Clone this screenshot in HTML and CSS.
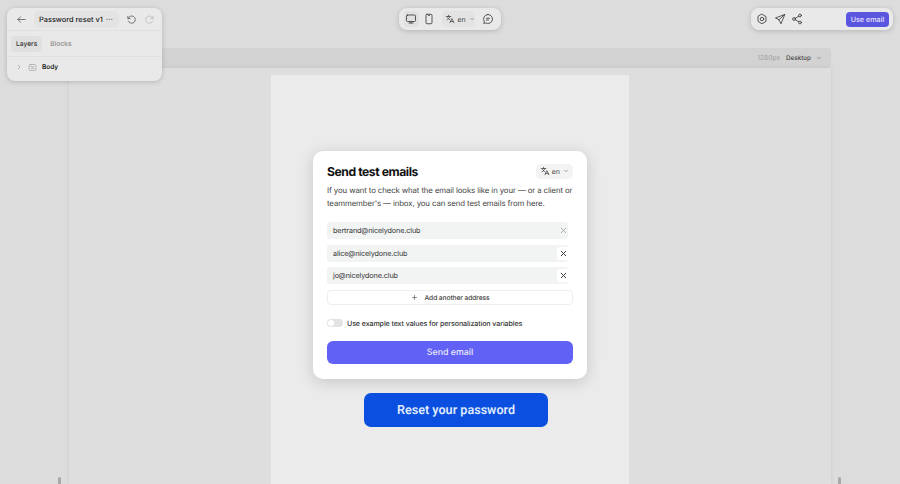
FILE: index.html
```html
<!DOCTYPE html>
<html lang="en">
<head>
  <meta charset="UTF-8" />
  <meta name="viewport" content="width=device-width, initial-scale=1" />
  <title>Password reset v1</title>
  <link rel="stylesheet" href="styles.css">
</head>
<body>

  <!-- Left panel -->
  <div class="panel panel-left">
    <div class="panel-head">
      <svg class="icon back" viewBox="0 0 24 24"><path d="M20 12H4M10 6l-6 6 6 6"/></svg>
      <div class="doc-name">
        <span>Password reset v1</span>
        <span class="dots">···</span>
      </div>
      <svg class="icon undo" viewBox="0 0 24 24"><path d="M4 5v5h5M4.6 10A8 8 0 1 1 5 15.5"/></svg>
      <svg class="icon redo" viewBox="0 0 24 24"><path d="M20 5v5h-5M19.4 10A8 8 0 1 0 19 15.5"/></svg>
    </div>
    <div class="tabs">
      <span class="tab active">Layers</span>
      <span class="tab">Blocks</span>
    </div>
    <div class="tree-row">
      <svg class="chevron" viewBox="0 0 24 24"><path d="M9 5l7 7-7 7"/></svg>
      <svg class="body-icon" viewBox="0 0 24 24"><rect x="3" y="4" width="18" height="16" rx="3"/><path d="M8 9h3M13 15h3M8 15l8-6"/></svg>
      <span class="tree-label">Body</span>
    </div>
  </div>

  <!-- Center toolbar -->
  <div class="panel panel-center">
    <span class="tool-btn active">
      <svg class="icon" viewBox="0 0 24 24"><rect x="3" y="4" width="18" height="13" rx="2"/><path d="M12 17v3M8 20h8"/></svg>
    </span>
    <span class="tool-btn">
      <svg class="icon" viewBox="0 0 24 24"><rect x="6" y="2.5" width="12" height="19" rx="2"/><path d="M11 5h2"/></svg>
    </span>
    <span class="lang lang-toolbar">
      <svg class="icon" viewBox="0 0 24 24"><path d="M3 6h11M8.500 3v3M5 14c3-1.500 6-4.500 7-8M6 8c1 2.500 3 4.500 6 6M12 21l4.500-10L21 21M13.500 18h6"/></svg>
      <span>en</span>
      <svg class="chevron" viewBox="0 0 24 24"><path d="M6 9l6 6 6-6"/></svg>
    </span>
    <span class="tool-btn chat">
      <svg class="icon" viewBox="0 0 24 24"><path d="M12 3a9 9 0 1 1-4.500 16.800L3.500 21l1.200-4A9 9 0 0 1 12 3z"/><path d="M9 10.500h6M9 14h4"/></svg>
    </span>
  </div>

  <!-- Right toolbar -->
  <div class="panel panel-right">
    <svg class="icon" viewBox="0 0 24 24"><path d="M12 2.500l8 4.700v9.600l-8 4.700-8-4.700V7.200z"/><circle cx="12" cy="12" r="3.500"/></svg>
    <svg class="icon" viewBox="0 0 24 24"><path d="M21 3L3 10l7 3.500L13.500 21zM10 13.500L21 3"/></svg>
    <svg class="icon" viewBox="0 0 24 24"><circle cx="18" cy="5" r="2.800"/><circle cx="6" cy="12" r="2.800"/><circle cx="18" cy="19" r="2.800"/><path d="M8.500 10.600l7-4.200M8.500 13.400l7 4.200"/></svg>
    <button class="use-email">Use email</button>
  </div>

  <div class="workspace">
    <div class="size-bar">
      <span class="px">1280px</span>
      <span class="device">Desktop</span>
      <svg class="chevron" viewBox="0 0 24 24"><path d="M6 9l6 6 6-6"/></svg>
    </div>

    <div class="canvas">
      <div class="email-page">
        <div class="modal">
          <div class="modal-head">
            <h2>Send test emails</h2>
            <span class="lang">
              <svg class="icon" viewBox="0 0 24 24"><path d="M3 6h11M8.500 3v3M5 14c3-1.500 6-4.500 7-8M6 8c1 2.500 3 4.500 6 6M12 21l4.500-10L21 21M13.500 18h6"/></svg>
              <span>en</span>
              <svg class="chevron" viewBox="0 0 24 24"><path d="M6 9l6 6 6-6"/></svg>
            </span>
          </div>
          <p>If you want to check what the email looks like in your — or a client or teammember's — inbox, you can send test emails from here.</p>

          <div class="address-list">
            <div class="address">
              <span class="address-text">bertrand@nicelydone.club</span>
              <span class="remove disabled"><svg viewBox="0 0 24 24"><path d="M6 6l12 12M18 6L6 18"/></svg></span>
            </div>
            <div class="address">
              <span class="address-text">alice@nicelydone.club</span>
              <span class="remove"><svg viewBox="0 0 24 24"><path d="M6 6l12 12M18 6L6 18"/></svg></span>
            </div>
            <div class="address">
              <span class="address-text">jo@nicelydone.club</span>
              <span class="remove"><svg viewBox="0 0 24 24"><path d="M6 6l12 12M18 6L6 18"/></svg></span>
            </div>
          </div>

          <div class="add-address">
            <svg viewBox="0 0 24 24"><path d="M12 5v14M5 12h14"/></svg>
            <span>Add another address</span>
          </div>

          <div class="toggle-row">
            <span class="toggle"><span class="knob"></span></span>
            <span>Use example text values for personalization variables</span>
          </div>

          <button class="send">Send email</button>
        </div>

        <a class="reset-btn">Reset your password</a>
      </div>
    </div>
  </div>

  <span class="handle handle-left"></span>
  <span class="handle handle-right"></span>

</body>
</html>
```

FILE: styles.css
```css
html, body {
  height: 100%;
}
body {
  font-family: Inter, "Liberation Sans", sans-serif;
  margin: 0;
  background-color: #dcdcdc;
  color: #222;
  overflow: hidden;
  position: relative;
  text-rendering: geometricPrecision;
}
button {
  text-rendering: geometricPrecision;
}
svg {
  fill: none;
  stroke: currentColor;
  stroke-width: 2;
  stroke-linecap: round;
  stroke-linejoin: round;
  flex-shrink: 0;
}
.icon {
  width: 12px;
  height: 12px;
  stroke-width: 1.7;
  color: #3c3c3c;
}
.chevron {
  width: 6px;
  height: 6px;
  color: #555;
}

/* Floating panels */
.panel {
  position: absolute;
  z-index: 5;
  background: #e9e9e9;
  border-radius: 8px;
  box-shadow: 0 1px 5px rgba(0, 0, 0, 0.18);
}
.panel-left {
  top: 8px;
  left: 7px;
  width: 155px;
  height: 73px;
}
.panel-head {
  display: flex;
  align-items: center;
  height: 22px;
  padding: 0 4px 0 9px;
  border-bottom: 1px solid #e0e0e0;
}
.back {
  width: 11px;
  height: 11px;
  margin-right: 7px;
  color: #555;
}
.doc-name {
  display: flex;
  align-items: center;
  justify-content: space-between;
  width: 85px;
  height: 17px;
  padding: 0 6px 0 5px;
  box-sizing: border-box;
  background: #e3e3e3;
  border-radius: 5px;
  font-size: 7.4px;
  font-weight: 500;
  white-space: nowrap;
}
.dots {
  font-size: 8px;
  color: #555;
}
.undo {
  width: 11px;
  height: 11px;
  margin-left: 7px;
  color: #555;
}
.redo {
  width: 11px;
  height: 11px;
  margin-left: 7px;
  color: #b8b8b8;
}
.tabs {
  display: flex;
  align-items: center;
  height: 25px;
  padding: 0 4px;
  border-bottom: 1px solid #e0e0e0;
  font-size: 6.7px;
  font-weight: 500;
}
.tab {
  padding: 4px 5px;
  border-radius: 4px;
  color: #8c8c8c;
}
.tab.active {
  background: #e0e0e0;
  color: #333;
  margin-right: 3px;
}
.tree-row {
  display: flex;
  align-items: center;
  height: 20px;
  padding: 0 9px;
  font-size: 6.5px;
  font-weight: 600;
}
.tree-row .chevron {
  width: 6px;
  height: 6px;
  margin-right: 6px;
  color: #777;
}
.body-icon {
  width: 9px;
  height: 9px;
  margin-right: 5px;
  color: #999;
  stroke-width: 1.6;
}
.panel-center {
  top: 8px;
  left: 399px;
  width: 102px;
  height: 22px;
  display: flex;
  align-items: center;
  padding: 0 5px;
  box-sizing: border-box;
}
.tool-btn {
  display: flex;
  align-items: center;
  justify-content: center;
  width: 15px;
  height: 16px;
  border-radius: 4px;
}
.tool-btn + .tool-btn {
  margin-left: 3px;
}
.tool-btn.active {
  background: #e0e0e0;
}
.tool-btn.chat {
  width: 17px;
  margin-left: 4px;
}
.lang {
  display: flex;
  align-items: center;
  gap: 2px;
  height: 15px;
  padding: 0 4px;
  background: #f3f3f3;
  border-radius: 5px;
  font-size: 7px;
  color: #444;
}
.lang .icon {
  width: 10px;
  height: 10px;
}
.lang .chevron {
  margin-left: 1px;
}
.lang-toolbar {
  background: #e3e3e3;
  margin-left: 6px;
  width: 33px;
  height: 16px;
  box-sizing: border-box;
  padding: 0 3px;
}
.panel-right {
  top: 8px;
  left: 751px;
  width: 142px;
  height: 22px;
  display: flex;
  align-items: center;
  gap: 5.5px;
  padding: 0 4px 0 5px;
  box-sizing: border-box;
}
.use-email {
  margin-left: auto;
  width: 43px;
  height: 15px;
  padding: 0;
  border: none;
  border-radius: 4px;
  background: #5a56e0;
  color: #e4e3fb;
  font-family: inherit;
  font-size: 7.2px;
  font-weight: 500;
}

/* Editor area */
.workspace {
  padding: 48px 69px 0;
}
.size-bar {
  display: flex;
  align-items: center;
  justify-content: flex-end;
  height: 20px;
  padding-right: 9px;
  background: #d2d2d2;
  border-radius: 4px;
  font-size: 6.3px;
}
.px {
  color: #a0a0a0;
  font-size: 6.7px;
  margin-right: 6px;
}
.device {
  color: #444;
  font-weight: 500;
  margin-right: 5px;
}
.canvas {
  height: 416px;
  background: #dedede;
  box-shadow: 0 0 4px rgba(0, 0, 0, 0.08);
  padding-top: 7px;
  box-sizing: border-box;
}
.email-page {
  width: 358px;
  height: 409px;
  margin: 0 auto;
  padding-top: 76px;
  box-sizing: border-box;
  background: #ebebeb;
  display: flex;
  flex-direction: column;
  align-items: center;
}

/* Modal */
.modal {
  width: 274px;
  height: 228px;
  padding: 12px 14px 0;
  box-sizing: border-box;
  background: #fff;
  border-radius: 10px;
  box-shadow: 0 3px 16px rgba(0, 0, 0, 0.16);
}
.modal-head {
  display: flex;
  align-items: center;
  justify-content: space-between;
  height: 16px;
}
.modal h2 {
  margin: 0;
  font-size: 12.2px;
  font-weight: 700;
  letter-spacing: -0.45px;
  color: #111;
}
.modal p {
  margin: 4.5px 0 12.5px;
  font-size: 7.8px;
  letter-spacing: -0.1px;
  line-height: 13px;
  color: #444;
}
.address-list {
  display: flex;
  flex-direction: column;
  gap: 5.5px;
}
.address {
  display: flex;
  align-items: center;
  position: relative;
}
.address-text {
  width: 241px;
  height: 17px;
  line-height: 17px;
  padding-left: 6px;
  box-sizing: border-box;
  background: #f2f3f3;
  border-radius: 3px;
  font-size: 7.2px;
  letter-spacing: -0.1px;
  color: #333;
}
.remove {
  position: absolute;
  right: 3px;
  top: 2px;
  display: flex;
  align-items: center;
  justify-content: center;
  width: 13px;
  height: 13px;
  background: #fff;
  border-radius: 3px;
  color: #333;
}
.remove svg {
  width: 9px;
  height: 9px;
  stroke-width: 2.5;
}
.remove.disabled {
  background: none;
  color: #aaa;
}
.add-address {
  display: flex;
  align-items: center;
  justify-content: center;
  gap: 7px;
  height: 15px;
  margin-top: 6px;
  border: 1px solid #eee;
  border-radius: 4px;
  box-sizing: border-box;
  font-size: 6.7px;
  letter-spacing: -0.1px;
  font-weight: 500;
  color: #444;
}
.add-address svg {
  width: 7px;
  height: 7px;
  color: #444;
}
.toggle-row {
  display: flex;
  align-items: center;
  gap: 4px;
  margin-top: 12px;
  height: 12px;
  font-size: 7.1px;
  letter-spacing: -0.1px;
  font-weight: 500;
  color: #333;
}
.toggle {
  display: block;
  position: relative;
  width: 16px;
  height: 8px;
  background: #e3e3e3;
  border-radius: 4px;
}
.knob {
  position: absolute;
  top: 1px;
  left: 1px;
  width: 6px;
  height: 6px;
  background: #fff;
  border-radius: 50%;
}
.send {
  display: block;
  width: 100%;
  height: 23px;
  margin-top: 12px;
  padding: 0;
  border: none;
  border-radius: 6px;
  background: #6161f5;
  color: #e9e9fd;
  font-family: inherit;
  font-size: 8.8px;
  font-weight: 500;
}
.reset-btn {
  display: flex;
  align-items: center;
  justify-content: center;
  width: 184px;
  height: 34px;
  margin: 14px 0 0 12px;
  border-radius: 7px;
  background: #0a4fdf;
  color: #dfe9fc;
  font-family: Roboto, "Noto Sans", sans-serif;
  font-size: 12.6px;
  font-weight: 600;
}

/* Little grab handles at the bottom of the canvas */
.handle {
  position: absolute;
  bottom: 0;
  width: 3px;
  height: 7px;
  background: #a8a8a8;
  border-radius: 2px 2px 0 0;
}
.handle-left {
  left: 58px;
}
.handle-right {
  left: 838px;
}
```
